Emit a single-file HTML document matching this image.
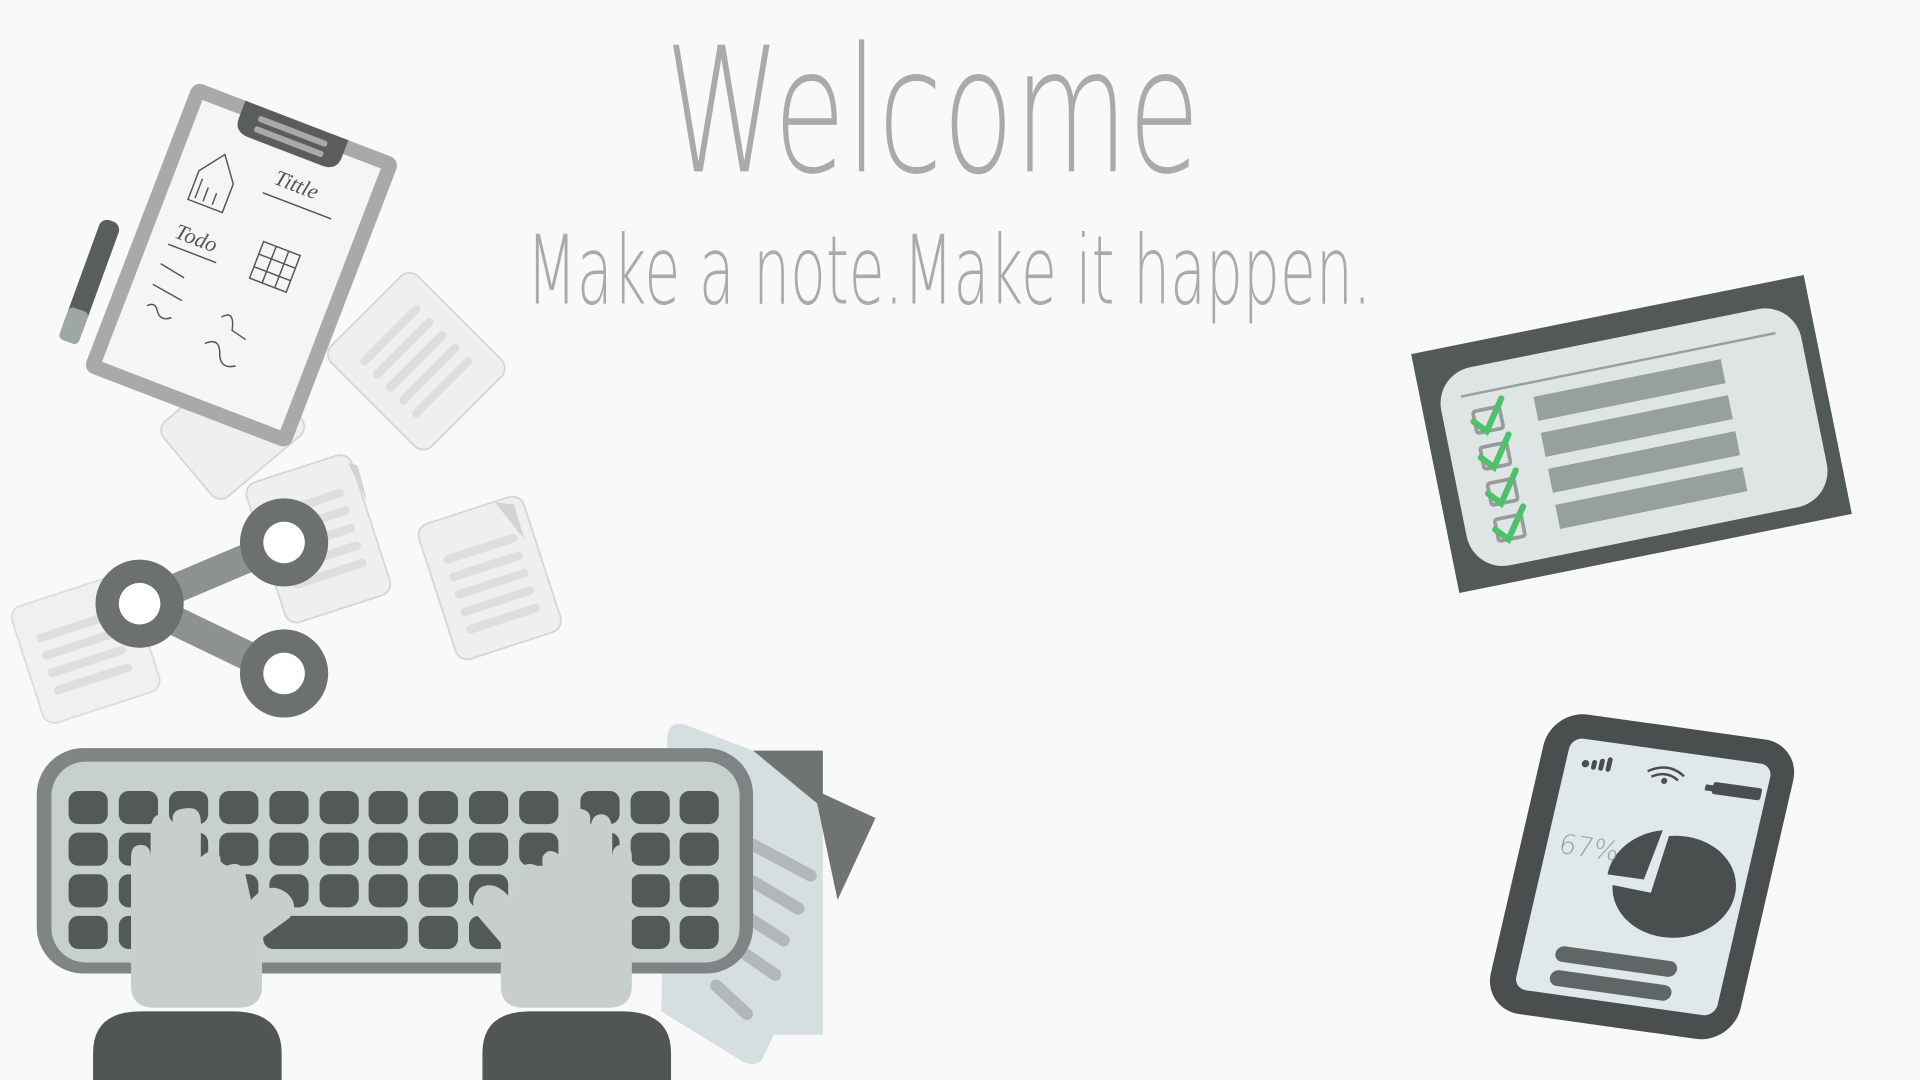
<!DOCTYPE html>
<html><head><meta charset="utf-8"><style>
html,body{margin:0;padding:0;background:#f9f9f9;width:1920px;height:1080px;overflow:hidden}
svg{display:block}
</style></head><body>
<svg width="1920" height="1080" viewBox="0 0 1568 882" xmlns="http://www.w3.org/2000/svg">
<rect width="1568" height="882" fill="#f9f9f9"/>
<text x="543" y="140" textLength="437" lengthAdjust="spacingAndGlyphs" font-family="DejaVu Sans ExtraLight, DejaVu Sans, sans-serif" font-weight="200" font-size="142" fill="#aaaaaa">Welcome</text>
<text x="430" y="248" textLength="690" lengthAdjust="spacingAndGlyphs" font-family="DejaVu Sans ExtraLight, DejaVu Sans, sans-serif" font-weight="200" font-size="78" fill="#aaaaaa">Make a note.Make it happen.</text>

<!-- floating papers -->
<g fill="#efefef" stroke="#d6d6d6" stroke-width="1.5">
 <g transform="translate(340,295) rotate(-45)"><rect x="-50" y="-58" width="100" height="116" rx="10"/></g>
 <g transform="translate(190,350) rotate(-40)"><rect x="-48" y="-40" width="96" height="80" rx="10"/></g>
 <g transform="translate(260,440) rotate(-18)"><rect x="-45" y="-60" width="90" height="120" rx="10"/></g>
 <g transform="translate(400,472) rotate(-18)"><rect x="-45" y="-58" width="90" height="116" rx="10"/></g>
 <g transform="translate(70,530) rotate(-18)" opacity="0.8"><rect x="-50" y="-50" width="100" height="100" rx="10"/></g>
</g>
<g stroke="#dedede" stroke-width="7" stroke-linecap="round" fill="none">
 <g transform="translate(340,295) rotate(-45)"><path d="M-30 -30H30M-30 -15H30M-30 0H30M-30 15H30M-30 30H30"/></g>
 <g transform="translate(260,440) rotate(-18)"><path d="M-28 -30H28M-28 -15H28M-28 0H28M-28 15H28M-28 30H28"/></g>
 <g transform="translate(400,472) rotate(-18)"><path d="M-28 -25H28M-28 -10H28M-28 5H28M-28 20H28M-28 35H28"/></g>
 <g transform="translate(70,530) rotate(-18)"><path d="M-32 -20H28M-32 -5H28M-32 10H28M-32 25H28"/></g>
</g>
<path d="M404 410 L420 412 L428 440 Z" fill="#d3d3d3"/>
<path d="M284 378 L292 380 L300 410 Z" fill="#d3d3d3"/>

<!-- clipboard -->
<g transform="translate(197,217) rotate(21)">
 <rect x="-90" y="-127" width="180" height="253" rx="8" fill="#a8aaaa"/>
 <rect x="-78" y="-115" width="156" height="229" fill="#f4f5f5"/>
 <path d="M-45 -127 H45 V-112 Q45 -100 32 -100 H-32 Q-45 -100 -45 -112Z" fill="#5a5d5d"/>
 <rect x="-30" y="-120" width="60" height="5" rx="2" fill="#a8aaaa"/>
 <rect x="-30" y="-111" width="60" height="5" rx="2" fill="#a8aaaa"/>
 <g stroke="#555" stroke-width="1.2" fill="none">
  <text x="0" y="-72" font-family="Liberation Serif, serif" font-size="18" fill="#555" stroke="none" font-style="italic">Tittle</text>
  <path d="M-5 -62 H55"/>
  <path d="M-60 -60 L-45 -80 L-30 -60 V-35 H-60Z M-55 -55V-38 M-48 -50V-38 M-40 -48V-38"/>
  <text x="-60" y="-2" font-family="Liberation Serif, serif" font-size="18" fill="#555" stroke="none" font-style="italic">Todo</text>
  <path d="M-62 5 H-20"/>
  <rect x="10" y="-25" width="32" height="32"/><path d="M10 -14H42M10 -3H42M21 -25V7M32 -25V7"/>
  <path d="M-62 22 L-40 26 M-62 40 L-35 44 M-60 58 Q-55 52 -50 60 Q-45 66 -38 60 M0 45 Q8 35 12 52 L25 55 M-5 70 Q5 60 10 75 Q15 85 25 78"/>
 </g>
</g>
<g transform="translate(72,232) rotate(20)">
 <rect x="-8" y="-55" width="17" height="100" rx="7" fill="#5a5d5d"/>
 <rect x="-8" y="22" width="17" height="28" rx="4" fill="#9fa6a6"/>
</g>

<!-- share icon -->
<g stroke="#8e928f" stroke-width="24" fill="none"><path d="M114 493 L232 443 M114 493 L232 550"/></g>
<g fill="#6c716e">
 <circle cx="232" cy="443" r="36"/><circle cx="114" cy="493" r="36"/><circle cx="232" cy="550" r="36"/>
</g>
<g fill="#fff"><circle cx="232" cy="443" r="17"/><circle cx="114" cy="493" r="17"/><circle cx="232" cy="550" r="17"/></g>

<!-- papers behind keyboard -->
<path d="M545 600 Q548 588 560 592 L615 613 H672 V845 H632 L622 866 Q615 872 605 866 L540 826Z" fill="#d6dfe0"/>
<g stroke="#b3b7b7" stroke-width="10" stroke-linecap="round"><path d="M615 690 L662 715 M615 720 L652 742 M612 750 L640 768 M610 780 L633 796 M585 805 L610 828"/></g>
<path d="M615 613 H672 V660 Z" fill="#6f7473"/>
<path d="M665 645 L715 668 L684 735 Z" fill="#6f7473"/>

<!-- keyboard -->
<rect x="30" y="611" width="585" height="184" rx="38" fill="#7f8484"/>
<rect x="42" y="622" width="562" height="164" rx="28" fill="#c8cfcf"/>
<g fill="#535858">
 <g id="r1">
  <rect x="56" y="646" width="32" height="27" rx="8"/><rect x="97" y="646" width="32" height="27" rx="8"/><rect x="138" y="646" width="32" height="27" rx="8"/><rect x="179" y="646" width="32" height="27" rx="8"/><rect x="220" y="646" width="32" height="27" rx="8"/><rect x="261" y="646" width="32" height="27" rx="8"/><rect x="301" y="646" width="32" height="27" rx="8"/><rect x="342" y="646" width="32" height="27" rx="8"/><rect x="383" y="646" width="32" height="27" rx="8"/><rect x="424" y="646" width="32" height="27" rx="8"/><rect x="474" y="646" width="32" height="27" rx="8"/><rect x="515" y="646" width="32" height="27" rx="8"/><rect x="555" y="646" width="32" height="27" rx="8"/>
 </g>
 <use href="#r1" y="34"/><use href="#r1" y="68"/>
 <rect x="56" y="748" width="32" height="27" rx="8"/><rect x="97" y="748" width="32" height="27" rx="8"/><rect x="215" y="748" width="118" height="27" rx="8"/><rect x="342" y="748" width="32" height="27" rx="8"/><rect x="383" y="748" width="32" height="27" rx="8"/><rect x="515" y="748" width="32" height="27" rx="8"/><rect x="555" y="748" width="32" height="27" rx="8"/>
</g>
<!-- hands -->
<g fill="#c8cdcd">
 <path d="M107 700 Q107 690 115 690 Q123 690 123 700 V680 Q123 665 132 665 Q141 665 141 680 V668 Q141 660 155 660 Q164 660 164 672 V700 Q175 690 180 700 V710 Q195 700 200 712 L205 735 Q220 718 235 730 Q245 740 236 750 L214 766 V805 Q214 823 195 823 H127 Q107 823 107 805Z"/>
 <path d="M516 700 Q516 690 508 690 Q500 690 500 700 V680 Q500 665 491 665 Q482 665 482 680 V668 Q482 660 468 660 Q459 660 459 672 V700 Q448 690 443 700 V710 Q430 700 424 712 L418 735 Q405 718 392 725 Q382 735 390 748 L409 770 V805 Q409 823 428 823 H496 Q516 823 516 805Z"/>
</g>
<g fill="#525555">
 <path d="M76 882 V860 Q76 826 115 826 H190 Q230 826 230 860 V882Z"/>
 <path d="M394 882 V860 Q394 826 433 826 H508 Q548 826 548 860 V882Z"/>
</g>

<!-- checklist tablet -->
<g transform="translate(1332,355) rotate(-11.4)">
 <rect x="-163" y="-100" width="327" height="199" fill="#535858"/>
 <rect x="-148" y="-80" width="300" height="165" rx="30" fill="#dfe5e5"/>
 <path d="M-130 -58 H132" stroke="#96a09e" stroke-width="2"/>
 <g fill="#96a09e">
  <rect x="-72" y="-46" width="156" height="20"/><rect x="-72" y="-16" width="156" height="20"/><rect x="-72" y="14" width="156" height="20"/><rect x="-72" y="44" width="156" height="20"/>
 </g>
 <g fill="none" stroke="#969c9c" stroke-width="3">
  <rect x="-123" y="-44" width="22" height="18" rx="2"/><rect x="-123" y="-14" width="22" height="18" rx="2"/><rect x="-123" y="16" width="22" height="18" rx="2"/><rect x="-123" y="46" width="22" height="18" rx="2"/>
 </g>
 <g fill="none" stroke="#4fc16a" stroke-width="5" stroke-linecap="round">
  <path d="M-124 -36 L-115 -26 L-98 -50"/><path d="M-124 -6 L-115 4 L-98 -20"/><path d="M-124 24 L-115 34 L-98 10"/><path d="M-124 54 L-115 64 L-98 40"/>
 </g>
</g>

<!-- phone -->
<g transform="translate(1341,716) rotate(8) skewX(-5)">
 <rect x="-103" y="-125" width="206" height="250" rx="30" fill="#4a4e4e"/>
 <rect x="-82" y="-105" width="166" height="210" rx="10" fill="#dfe9e9"/>
 <g fill="#4a4e4e">
  <circle cx="-66" cy="-85" r="3"/><rect x="-61" y="-89" width="4" height="8" rx="2"/><rect x="-55" y="-91" width="4" height="10" rx="2"/><rect x="-49" y="-93" width="4" height="12" rx="2"/>
  <rect x="40" y="-85" width="40" height="10" rx="2"/><rect x="34" y="-82" width="8" height="5"/>
  <circle cx="0" cy="-80" r="2.5"/>
  <path d="M-28 2 A50 42 0 0 1 8 -40 L2 2Z"/>
  <path d="M14 -36 A50 42 0 1 1 -22 10 L10 12Z"/>
  <rect x="-55" y="65" width="100" height="13" rx="6.5" fill="#5f6665"/>
  <rect x="-55" y="85" width="100" height="13" rx="6.5" fill="#5f6665"/>
 </g>
 <path d="M-15 -86 Q0 -96 15 -86 M-11 -82 Q0 -89 11 -82" stroke="#4a4e4e" stroke-width="2" fill="none"/>
 <text x="-72" y="-10" font-family="DejaVu Sans ExtraLight, DejaVu Sans, sans-serif" font-weight="200" font-size="22" fill="#9a9e9e">67%</text>
</g>
</svg>
</body></html>
